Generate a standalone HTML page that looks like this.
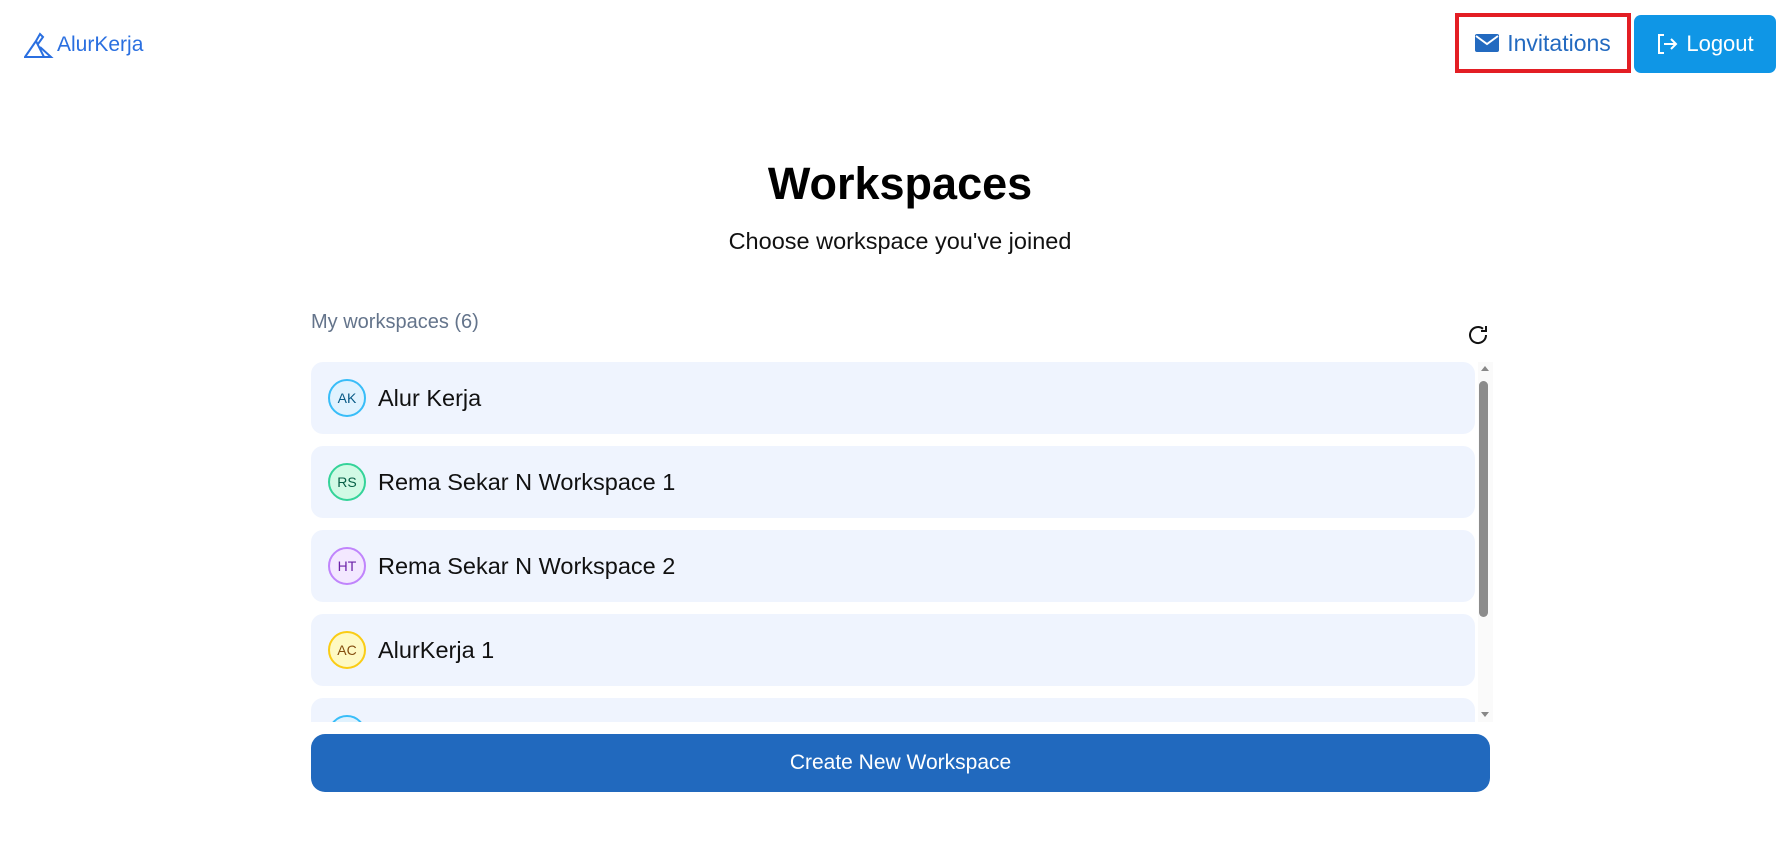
<!DOCTYPE html>
<html><head><meta charset="utf-8"><style>
*{box-sizing:border-box;margin:0;padding:0}
body{width:1786px;height:847px;background:#fff;font-family:"Liberation Sans",sans-serif;position:relative;overflow:hidden}
.abs{position:absolute}
.logo{left:24px;top:31px;display:flex;align-items:center;font-size:21px;color:#2a6fe0}
.inv{left:1455px;top:13px;width:176px;height:60px;border:4px solid #e31e24;display:flex;align-items:center;justify-content:center;color:#236ac0;font-size:23px;gap:8px}
.logout{left:1634px;top:15px;width:142px;height:58px;background:#0f96e6;border-radius:7px;color:#fff;font-size:22px;display:flex;align-items:center;justify-content:center;gap:8px}
h1{position:absolute;left:0;width:1800px;top:158px;text-align:center;font-size:45px;font-weight:bold;color:#000}
.sub{left:0;width:1800px;top:228px;text-align:center;font-size:23.5px;color:#111}
.my{left:311px;top:311px;font-size:20px;color:#64748b}
.list{left:311px;top:362px;width:1164px;height:360px;overflow:hidden}
.item{height:72px;margin-bottom:12px;background:#eff4fe;border-radius:12px;display:flex;align-items:center;padding-left:17px;font-size:23.5px;color:#111}
.av{width:38px;height:38px;border-radius:50%;border:2px solid;display:flex;align-items:center;justify-content:center;font-size:14px;margin-right:12px}
.sb{left:1478px;top:362px;width:15px;height:360px;background:#fafafa}
.thumb{left:1479px;top:381px;width:9px;height:236px;background:#8c8c8c;border-radius:5px}
.btn{left:311px;top:734px;width:1179px;height:58px;background:#2169be;border-radius:14px;color:#fff;font-size:21px;display:flex;align-items:center;justify-content:center}
</style></head><body>
<div class="abs logo"><svg width="30" height="28" viewBox="0 0 30 28" fill="none" stroke="#2a6fe0" stroke-width="2"><path d="M1 26 L12 10 L20 26 Z M12 10 L16 3 L19 6 L14 13 M16 16 L27 26 L20 26"/></svg><span style="margin-left:3px">AlurKerja</span></div>
<div class="abs inv"><svg width="24" height="18" viewBox="0 0 24 18"><rect x="0" y="0" width="24" height="18" rx="2" fill="#236ac0"/><path d="M1 2 L12 10 L23 2" stroke="#fff" stroke-width="2" fill="none"/></svg>Invitations</div>
<div class="abs logout"><svg width="22" height="22" viewBox="0 0 22 22" fill="none" stroke="#fff" stroke-width="2"><path d="M8 2H3v18h5M8 11h12M15 6l5 5-5 5"/></svg>Logout</div>
<h1>Workspaces</h1>
<div class="abs sub">Choose workspace you've joined</div>
<div class="abs my">My workspaces (6)</div>
<svg class="abs" style="left:1466px;top:323px" width="24" height="24" viewBox="0 0 24 24" fill="none" stroke="#111" stroke-width="2"><path d="M20 12a8 8 0 1 1-3-6.2M20 3v5h-5"/></svg>
<div class="abs list">
<div class="item"><div class="av" style="border-color:#38bdf8;background:#e0f2fe;color:#075985">AK</div>Alur Kerja</div>
<div class="item"><div class="av" style="border-color:#34d399;background:#d1fae5;color:#065f46">RS</div>Rema Sekar N Workspace 1</div>
<div class="item"><div class="av" style="border-color:#c084fc;background:#f3e8ff;color:#6b21a8">HT</div>Rema Sekar N Workspace 2</div>
<div class="item"><div class="av" style="border-color:#facc15;background:#fef9c3;color:#854d0e">AC</div>AlurKerja 1</div>
<div class="item"><div class="av" style="border-color:#38bdf8;background:#e0f2fe;color:#075985">AK</div>Alur Kerja 2</div>
</div>
<div class="abs sb"></div>
<div class="abs thumb"></div>
<div class="abs" style="left:1481px;top:366px;border:4px solid transparent;border-bottom:5px solid #888;border-top:0"></div>
<div class="abs" style="left:1481px;top:712px;border:4px solid transparent;border-top:5px solid #888;border-bottom:0"></div>
<div class="abs btn">Create New Workspace</div>
</body></html>
